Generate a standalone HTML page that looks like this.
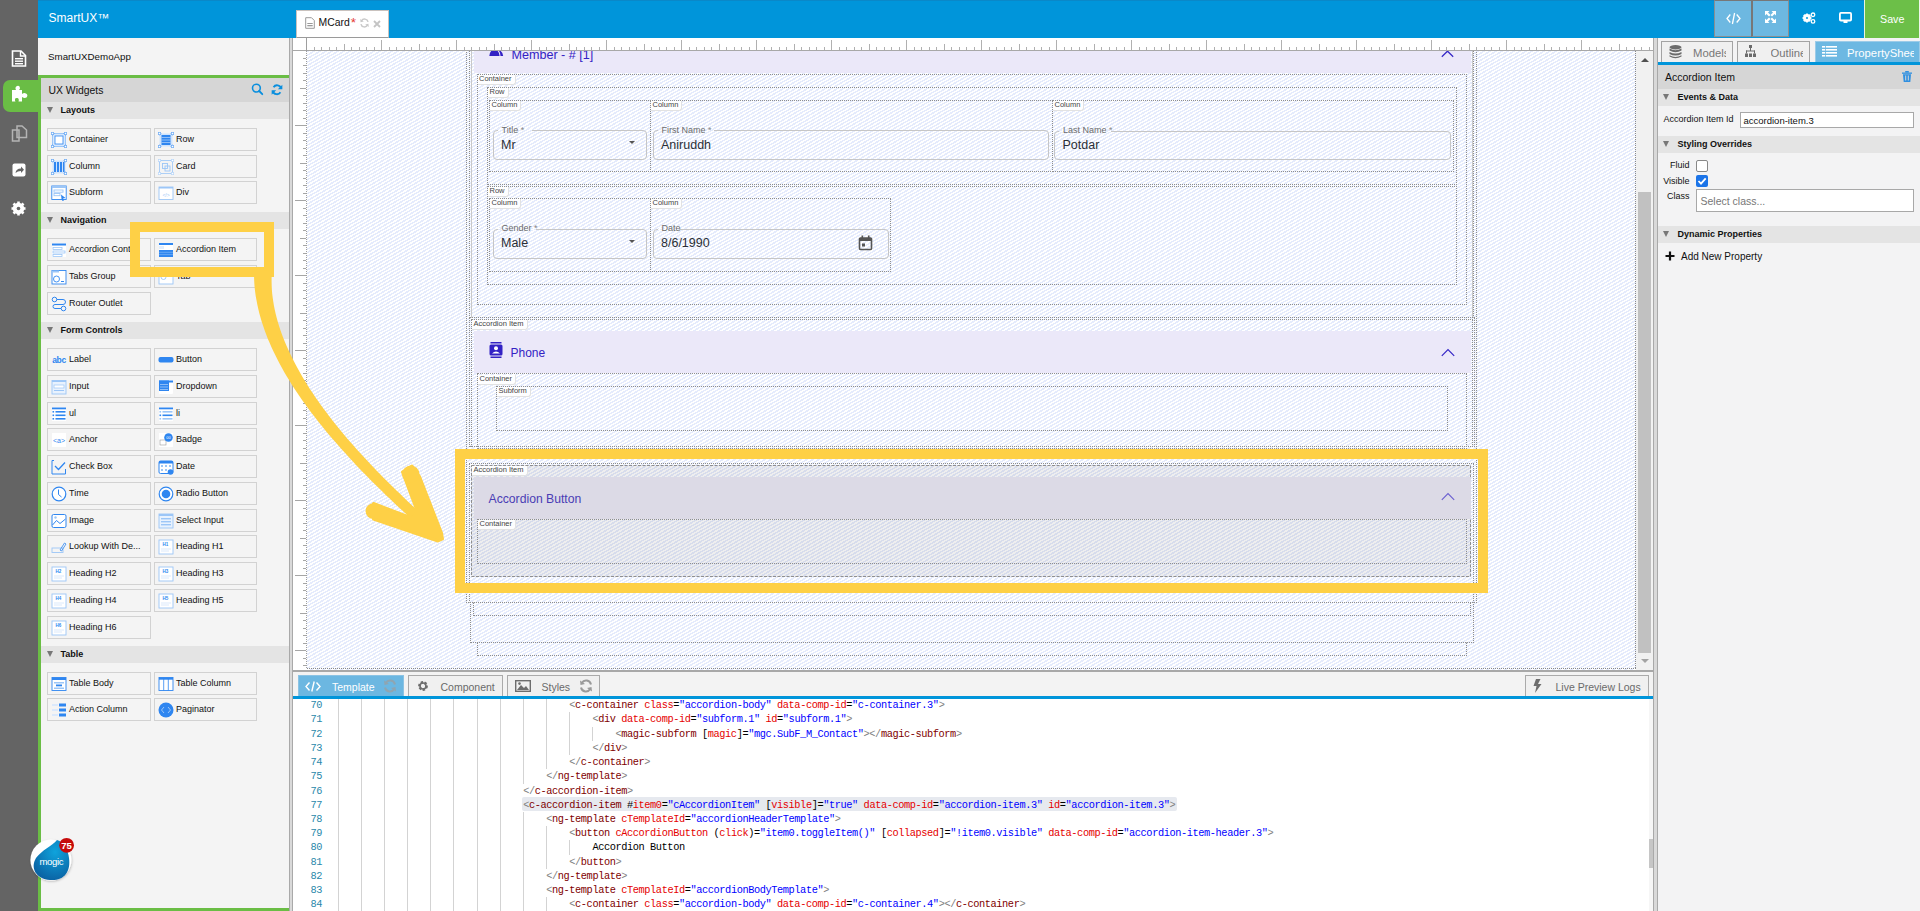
<!DOCTYPE html>
<html><head><meta charset="utf-8"><title>SmartUX</title>
<style>
*{box-sizing:border-box;margin:0;padding:0}
html,body{width:1920px;height:911px;overflow:hidden;background:#f3f3f4;font-family:"Liberation Sans",sans-serif;color:#222}
.a{position:absolute}
.t{position:absolute;white-space:nowrap;line-height:1}
.wb{position:absolute;height:23px;border:1px solid #d2d2d2;background:#f4f4f4}
.wb .lbl{position:absolute;left:21px;top:6px;font-size:9px;line-height:1;color:#111;white-space:nowrap}
.wb svg{position:absolute;left:3px;top:3px}
.sec{position:absolute;left:41px;width:248.5px;height:17px;background:#e4e4e4}
.sec .tri{position:absolute;left:6px;top:5px;width:0;height:0;border-left:3.5px solid transparent;border-right:3.5px solid transparent;border-top:6px solid #777}
.sec .st{position:absolute;left:19.5px;top:4.3px;font-size:9px;font-weight:bold;line-height:1;color:#111}
.hatch{background-color:#fff;background-image:repeating-linear-gradient(150deg,#e5ebfc 0 1.5px,#fff 1.5px 3px)}
.dot{border:1px dotted #8e8e8e}
.clab{position:absolute;font-size:7.5px;line-height:1;color:#444;background:rgba(255,255,255,.9);padding:0.3px 3px 1.7px 1.5px;border-right:1px solid #e2e2e2;border-bottom:1px solid #e2e2e2;border-radius:0 0 3px 0;white-space:nowrap}
.code{position:absolute;font-family:"Liberation Mono",monospace;font-size:10.3px;letter-spacing:-0.41px;white-space:pre;line-height:14.22px}
.tg{color:#800000}.pn{color:#808080}.at{color:#e50000}.st2{color:#0000ff}.bk{color:#000}
</style></head><body>

<div class="a" style="left:0;top:0;width:38px;height:911px;background:#646464"></div>
<div class="a" style="left:3px;top:80px;width:36px;height:32px;background:#6abd45;border-radius:7px 0 0 7px"></div>
<div class="a" style="left:38px;top:0;width:1882px;height:38px;background:#0095da"></div>
<div class="a" style="left:38px;top:0;width:1882px;height:1px;background:#0a88c8"></div>
<div class="t" style="left:48.5px;top:12px;font-size:12px;color:#fff">SmartUX&#8482;</div>
<div class="a" style="left:296px;top:10px;width:93px;height:28px;background:#fff;border:1px solid #c9c2be;border-bottom:1px solid #9a9a9a"></div>
<div class="t" style="left:318.5px;top:18.3px;font-size:10.4px;color:#111">MCard</div>
<div class="t" style="left:350.8px;top:15.5px;font-size:13.5px;color:#e53935">*</div>
<div class="a" style="left:1714px;top:0;width:38px;height:37px;background:#6db8e1;border:1px solid #8a8f92;border-top:1px solid #777"></div>
<div class="a" style="left:1751px;top:0;width:38px;height:37px;background:#6db8e1;border:1px solid #8a8f92;border-left:2px solid #777;border-top:1px solid #777"></div>
<div class="a" style="left:1864px;top:0;width:1px;height:38px;background:#e8f4e0"></div>
<div class="a" style="left:1865px;top:0;width:54px;height:38px;background:#6cbf48"></div><div class="a" style="left:1919px;top:0;width:1px;height:38px;background:#eef6ea"></div>
<div class="t" style="left:1880px;top:13.6px;font-size:10.7px;color:#fff">Save</div>
<div class="a" style="left:38px;top:38px;width:251.5px;height:873px;background:#f4f4f4"></div>
<div class="t" style="left:48px;top:52px;font-size:9.75px;color:#111">SmartUXDemoApp</div>
<div class="a" style="left:38px;top:75px;width:251.5px;height:3px;background:#6abd45"></div>
<div class="a" style="left:38px;top:75px;width:3px;height:836px;background:#6abd45"></div>
<div class="a" style="left:38px;top:908px;width:251.5px;height:3px;background:#6abd45"></div>
<div class="a" style="left:41px;top:78px;width:248.5px;height:24px;background:#d6d6d6"></div>
<div class="t" style="left:48.5px;top:85.5px;font-size:10.4px;color:#111">UX Widgets</div>
<svg class="a" style="left:250px;top:82px" width="14" height="14" viewBox="0 0 14 14"><circle cx="6.4" cy="6.1" r="3.9" fill="none" stroke="#0a8fde" stroke-width="1.6"/><line x1="9.2" y1="9" x2="12.3" y2="12.2" stroke="#0a8fde" stroke-width="1.8" stroke-linecap="round"/></svg>
<svg class="a" style="left:270.5px;top:84px" width="12" height="11.5" viewBox="0 0 14 14"><path d="M12 5.5 A5 5 0 0 0 2.8 4 M2 8.5 A5 5 0 0 0 11.2 10" fill="none" stroke="#0a8fde" stroke-width="2.2"/><path d="M13.5 1 L13.5 6.5 L8 6.5 Z M0.5 13 L0.5 7.5 L6 7.5 Z" fill="#0a8fde"/></svg>
<div class="sec" style="top:102px"><div class="tri"></div><div class="st">Layouts</div></div>
<div class="wb" style="left:47px;top:128.00px;width:104px"><svg width="16" height="16" viewBox="0 0 16 16"><rect x="1.5" y="1.5" width="13" height="13" fill="#d6e8fd" stroke="#9cc6f7" stroke-width="1"/><rect x="4" y="4" width="8" height="8" fill="#fff" stroke="#2f86f0" stroke-width="0.8"/><circle cx="1.5" cy="1.5" r="1.3" fill="#fff" stroke="#2f86f0" stroke-width="0.8"/><circle cx="14.5" cy="1.5" r="1.3" fill="#fff" stroke="#2f86f0" stroke-width="0.8"/><circle cx="1.5" cy="14.5" r="1.3" fill="#fff" stroke="#2f86f0" stroke-width="0.8"/><circle cx="14.5" cy="14.5" r="1.3" fill="#fff" stroke="#2f86f0" stroke-width="0.8"/></svg><div class="lbl">Container</div></div>
<div class="wb" style="left:154px;top:128.00px;width:103px"><svg width="16" height="16" viewBox="0 0 16 16"><rect x="1.5" y="1.5" width="13" height="13" fill="#cfe3fc"/><rect x="3.5" y="3" width="9" height="10" fill="#2f86f0"/><g stroke="#cfe3fc" stroke-width="0.6"><line x1="3.5" y1="5.5" x2="12.5" y2="5.5"/><line x1="3.5" y1="8" x2="12.5" y2="8"/><line x1="3.5" y1="10.5" x2="12.5" y2="10.5"/></g><circle cx="1.5" cy="1.5" r="1.3" fill="#fff" stroke="#2f86f0" stroke-width="0.8"/><circle cx="14.5" cy="1.5" r="1.3" fill="#fff" stroke="#2f86f0" stroke-width="0.8"/><circle cx="1.5" cy="14.5" r="1.3" fill="#fff" stroke="#2f86f0" stroke-width="0.8"/><circle cx="14.5" cy="14.5" r="1.3" fill="#fff" stroke="#2f86f0" stroke-width="0.8"/></svg><div class="lbl">Row</div></div>
<div class="wb" style="left:47px;top:154.73px;width:104px"><svg width="16" height="16" viewBox="0 0 16 16"><rect x="1.5" y="1.5" width="13" height="13" fill="#cfe3fc"/><g fill="#2f86f0"><rect x="3" y="3" width="2" height="10"/><rect x="6" y="3" width="2" height="10"/><rect x="9" y="3" width="2" height="10"/><rect x="12" y="3" width="1.5" height="10"/></g><circle cx="1.5" cy="1.5" r="1.3" fill="#fff" stroke="#2f86f0" stroke-width="0.8"/><circle cx="14.5" cy="1.5" r="1.3" fill="#fff" stroke="#2f86f0" stroke-width="0.8"/><circle cx="1.5" cy="14.5" r="1.3" fill="#fff" stroke="#2f86f0" stroke-width="0.8"/><circle cx="14.5" cy="14.5" r="1.3" fill="#fff" stroke="#2f86f0" stroke-width="0.8"/></svg><div class="lbl">Column</div></div>
<div class="wb" style="left:154px;top:154.73px;width:103px"><svg width="16" height="16" viewBox="0 0 16 16"><rect x="1.5" y="1.5" width="13" height="13" fill="none" stroke="#9cc6f7" stroke-width="0.8"/><rect x="4.5" y="4.5" width="5" height="5" fill="none" stroke="#9cc6f7" stroke-width="0.9"/><rect x="7" y="7" width="5" height="5" fill="none" stroke="#9cc6f7" stroke-width="0.9"/><circle cx="1.5" cy="1.5" r="1.3" fill="#fff" stroke="#9cc6f7" stroke-width="0.8"/><circle cx="14.5" cy="1.5" r="1.3" fill="#fff" stroke="#9cc6f7" stroke-width="0.8"/><circle cx="1.5" cy="14.5" r="1.3" fill="#fff" stroke="#9cc6f7" stroke-width="0.8"/><circle cx="14.5" cy="14.5" r="1.3" fill="#fff" stroke="#9cc6f7" stroke-width="0.8"/></svg><div class="lbl">Card</div></div>
<div class="wb" style="left:47px;top:181.46px;width:104px"><svg width="16" height="16" viewBox="0 0 16 16"><rect x="0.8" y="1" width="14.4" height="13.5" fill="#fff" stroke="#2f86f0" stroke-width="0.9"/><rect x="0.8" y="1" width="14.4" height="2" fill="#9cc6f7"/><rect x="3" y="5" width="9" height="2.2" fill="none" stroke="#9cc6f7" stroke-width="0.9"/><rect x="3" y="8.5" width="6" height="2.2" fill="none" stroke="#9cc6f7" stroke-width="0.9"/><path d="M10 9.5 L14.5 13 L12 13.5 L13 15.5 L11.5 16 L10.5 14 Z" fill="#2f86f0"/></svg><div class="lbl">Subform</div></div>
<div class="wb" style="left:154px;top:181.46px;width:103px"><svg width="16" height="16" viewBox="0 0 16 16"><rect x="1" y="2" width="14" height="12.5" fill="#fff" stroke="#9cc6f7" stroke-width="0.9"/><rect x="1" y="2" width="14" height="1.5" fill="#9cc6f7"/><text x="8" y="11.5" font-size="5" fill="#9cc6f7" text-anchor="middle" font-family="Liberation Sans">&lt;/&gt;</text></svg><div class="lbl">Div</div></div>
<div class="sec" style="top:212px"><div class="tri"></div><div class="st">Navigation</div></div>
<div class="wb" style="left:47px;top:238.40px;width:104px"><svg width="16" height="16" viewBox="0 0 16 16"><rect x="1" y="1" width="14" height="14" fill="#fff"/><rect x="1" y="1.5" width="14" height="2" fill="#2f86f0"/><rect x="2" y="5.5" width="9" height="2" fill="none" stroke="#9cc6f7" stroke-width="0.8"/><rect x="2" y="9" width="12" height="2" fill="none" stroke="#9cc6f7" stroke-width="0.8"/><rect x="2" y="12.5" width="9" height="2" fill="none" stroke="#9cc6f7" stroke-width="0.8"/></svg><div class="lbl">Accordion Cont...</div></div>
<div class="wb" style="left:154px;top:238.40px;width:103px"><svg width="16" height="16" viewBox="0 0 16 16"><rect x="1" y="1" width="14" height="14" fill="#fff"/><rect x="1" y="1" width="14" height="2" fill="#2f86f0"/><rect x="1" y="4" width="5" height="3" fill="#e3eefc"/><rect x="1" y="8" width="14" height="7" fill="#2f86f0"/><g stroke="#9cc6f7" stroke-width="0.5"><line x1="1" y1="10.3" x2="15" y2="10.3"/><line x1="1" y1="12.6" x2="15" y2="12.6"/></g></svg><div class="lbl">Accordion Item</div></div>
<div class="wb" style="left:47px;top:265.13px;width:104px"><svg width="16" height="16" viewBox="0 0 16 16"><rect x="1" y="1.5" width="14" height="13.5" fill="#fff" stroke="#2f86f0" stroke-width="0.9"/><rect x="1" y="1.5" width="7" height="2" fill="#9cc6f7"/><circle cx="5.5" cy="10" r="3" fill="none" stroke="#2f86f0" stroke-width="0.9"/><rect x="10" y="12" width="3" height="1" fill="#2f86f0"/></svg><div class="lbl">Tabs Group</div></div>
<div class="wb" style="left:154px;top:265.13px;width:103px"><svg width="16" height="16" viewBox="0 0 16 16"><rect x="1" y="1.5" width="14" height="13.5" fill="#fff" stroke="#9cc6f7" stroke-width="0.9"/><rect x="1" y="1.5" width="14" height="2" fill="#d0e4fb"/><circle cx="5.5" cy="8" r="2.5" fill="none" stroke="#9cc6f7" stroke-width="0.9"/></svg><div class="lbl">Tab</div></div>
<div class="wb" style="left:47px;top:291.86px;width:104px"><svg width="16" height="16" viewBox="0 0 16 16"><circle cx="3.5" cy="3.5" r="2.3" fill="none" stroke="#2f86f0" stroke-width="1"/><circle cx="12.5" cy="12.5" r="2.3" fill="none" stroke="#2f86f0" stroke-width="1"/><path d="M5.8 3.5 H12 A2.5 2.5 0 0 1 12 8.5 H4 A2 2 0 0 0 4 12.5 H10" fill="none" stroke="#2f86f0" stroke-width="1"/></svg><div class="lbl">Router Outlet</div></div>
<div class="sec" style="top:322px"><div class="tri"></div><div class="st">Form Controls</div></div>
<div class="wb" style="left:47px;top:348.20px;width:104px"><svg width="16" height="16" viewBox="0 0 16 16"><text x="8" y="11" font-size="8.5" font-weight="bold" fill="#2f86f0" text-anchor="middle" font-family="Liberation Sans" letter-spacing="-0.3">abc</text></svg><div class="lbl">Label</div></div>
<div class="wb" style="left:154px;top:348.20px;width:103px"><svg width="16" height="16" viewBox="0 0 16 16"><rect x="0.5" y="5" width="15" height="5.5" rx="2" fill="#2f86f0"/></svg><div class="lbl">Button</div></div>
<div class="wb" style="left:47px;top:374.93px;width:104px"><svg width="16" height="16" viewBox="0 0 16 16"><rect x="1" y="1.5" width="14" height="13.5" fill="#e8f2fe" stroke="#9cc6f7" stroke-width="0.9"/><rect x="1" y="1.5" width="14" height="1.5" fill="#9cc6f7"/><rect x="3" y="6" width="10" height="3" fill="#fff" stroke="#9cc6f7" stroke-width="0.7"/><rect x="3" y="11" width="10" height="1" fill="#9cc6f7"/></svg><div class="lbl">Input</div></div>
<div class="wb" style="left:154px;top:374.93px;width:103px"><svg width="16" height="16" viewBox="0 0 16 16"><rect x="1" y="1" width="14" height="14" rx="1" fill="#fff"/><rect x="1" y="1.5" width="14" height="2" fill="#2f86f0"/><rect x="1" y="1.5" width="10" height="10.5" fill="#2f86f0"/><g stroke="#cfe3fc" stroke-width="0.6"><line x1="2" y1="5.5" x2="10" y2="5.5"/><line x1="2" y1="8" x2="10" y2="8"/><line x1="2" y1="10.5" x2="10" y2="10.5"/></g></svg><div class="lbl">Dropdown</div></div>
<div class="wb" style="left:47px;top:401.66px;width:104px"><svg width="16" height="16" viewBox="0 0 16 16"><rect x="1" y="1" width="14" height="14" fill="#fff"/><rect x="1" y="1.5" width="14" height="1.8" fill="#2f86f0"/><g fill="#2f86f0"><rect x="1.5" y="5" width="1.6" height="1.6"/><rect x="1.5" y="8.5" width="1.6" height="1.6"/><rect x="1.5" y="12" width="1.6" height="1.6"/><rect x="4.5" y="5" width="10" height="1.6"/><rect x="4.5" y="8.5" width="10" height="1.6"/><rect x="4.5" y="12" width="10" height="1.6"/></g></svg><div class="lbl">ul</div></div>
<div class="wb" style="left:154px;top:401.66px;width:103px"><svg width="16" height="16" viewBox="0 0 16 16"><rect x="1" y="1" width="14" height="14" fill="#fff"/><rect x="1" y="1.5" width="14" height="1.8" fill="#2f86f0"/><g fill="#9cc6f7"><rect x="1.5" y="5" width="1.6" height="1.6"/><rect x="4.5" y="5" width="10" height="1.6"/><rect x="1.5" y="12" width="1.6" height="1.6"/><rect x="4.5" y="12" width="10" height="1.6"/></g><rect x="1.5" y="8.5" width="1.6" height="1.6" fill="#2f86f0"/><rect x="4.5" y="8.5" width="10" height="1.6" fill="#2f86f0"/></svg><div class="lbl">li</div></div>
<div class="wb" style="left:47px;top:428.39px;width:104px"><svg width="16" height="16" viewBox="0 0 16 16"><rect x="1" y="1" width="14" height="14" fill="#fff"/><text x="8" y="11" font-size="7" fill="#2f86f0" text-anchor="middle" font-family="Liberation Sans">&lt;a&gt;</text></svg><div class="lbl">Anchor</div></div>
<div class="wb" style="left:154px;top:428.39px;width:103px"><svg width="16" height="16" viewBox="0 0 16 16"><rect x="1" y="1" width="14" height="14" fill="#fff"/><rect x="2" y="8" width="6" height="5" fill="none" stroke="#999" stroke-width="0.6"/><circle cx="10.5" cy="5.5" r="4.3" fill="#2f86f0"/><text x="10.5" y="7.3" font-size="4" fill="#fff" text-anchor="middle" font-family="Liberation Sans">00</text></svg><div class="lbl">Badge</div></div>
<div class="wb" style="left:47px;top:455.12px;width:104px"><svg width="16" height="16" viewBox="0 0 16 16"><path d="M1 1.5 V15 H14.5 V10 M3 1.5 H1" fill="none" stroke="#2f86f0" stroke-width="1"/><path d="M4 7 L7.5 10.5 L14 3.5" fill="none" stroke="#2f86f0" stroke-width="1.3"/></svg><div class="lbl">Check Box</div></div>
<div class="wb" style="left:154px;top:455.12px;width:103px"><svg width="16" height="16" viewBox="0 0 16 16"><rect x="1" y="2" width="14" height="12.5" rx="1.5" fill="#fff" stroke="#2f86f0" stroke-width="1"/><rect x="1" y="2" width="14" height="2.5" fill="#2f86f0"/><g fill="#9cc6f7"><rect x="3" y="6" width="2" height="2"/><rect x="7" y="6" width="2" height="2"/><rect x="11" y="6" width="2" height="2"/><rect x="3" y="10" width="2" height="2"/><rect x="7" y="10" width="2" height="2"/></g><circle cx="12.5" cy="13" r="2.8" fill="#2f86f0"/></svg><div class="lbl">Date</div></div>
<div class="wb" style="left:47px;top:481.85px;width:104px"><svg width="16" height="16" viewBox="0 0 16 16"><circle cx="8" cy="8" r="6.8" fill="#fff" stroke="#2f86f0" stroke-width="1.2"/><path d="M7.5 3.5 V8.5 L10.5 11" fill="none" stroke="#2f86f0" stroke-width="1"/></svg><div class="lbl">Time</div></div>
<div class="wb" style="left:154px;top:481.85px;width:103px"><svg width="16" height="16" viewBox="0 0 16 16"><circle cx="8" cy="8" r="6.8" fill="#fff" stroke="#2f86f0" stroke-width="1.2"/><circle cx="8" cy="8" r="4.3" fill="#2f86f0"/></svg><div class="lbl">Radio Button</div></div>
<div class="wb" style="left:47px;top:508.58px;width:104px"><svg width="16" height="16" viewBox="0 0 16 16"><rect x="1" y="1.5" width="14" height="13" rx="1.5" fill="#fff" stroke="#2f86f0" stroke-width="1"/><path d="M1.5 12 L5.5 7.5 L9 10.5 L14.5 6" fill="none" stroke="#2f86f0" stroke-width="1"/><circle cx="4.5" cy="4.5" r="1.2" fill="#9cc6f7"/></svg><div class="lbl">Image</div></div>
<div class="wb" style="left:154px;top:508.58px;width:103px"><svg width="16" height="16" viewBox="0 0 16 16"><rect x="1" y="1" width="14" height="14" fill="#e8f2fe" stroke="#9cc6f7" stroke-width="0.9"/><rect x="1" y="1" width="14" height="2" fill="#9cc6f7"/><rect x="3" y="5" width="10" height="1.4" fill="#9cc6f7"/><rect x="3" y="8" width="10" height="1.4" fill="#9cc6f7"/><rect x="3" y="11" width="10" height="1.4" fill="#9cc6f7"/></svg><div class="lbl">Select Input</div></div>
<div class="wb" style="left:47px;top:535.31px;width:104px"><svg width="16" height="16" viewBox="0 0 16 16"><rect x="1" y="9" width="11" height="4.5" fill="none" stroke="#9cc6f7" stroke-width="0.9"/><path d="M9 11 L13.5 4 L15 5 L10.5 12 Z" fill="none" stroke="#2f86f0" stroke-width="0.8"/></svg><div class="lbl">Lookup With De...</div></div>
<div class="wb" style="left:154px;top:535.31px;width:103px"><svg width="16" height="16" viewBox="0 0 16 16"><rect x="1" y="1" width="14" height="14" fill="#fff" stroke="#9cc6f7" stroke-width="0.9"/><text x="7.5" y="7" font-size="4.5" font-weight="bold" fill="#2f86f0" text-anchor="middle" font-family="Liberation Sans">H1</text><rect x="3" y="9.5" width="10" height="1" fill="#dbe9fc"/><rect x="3" y="11.5" width="8" height="1" fill="#dbe9fc"/></svg><div class="lbl">Heading H1</div></div>
<div class="wb" style="left:47px;top:562.04px;width:104px"><svg width="16" height="16" viewBox="0 0 16 16"><rect x="1" y="1" width="14" height="14" fill="#fff" stroke="#9cc6f7" stroke-width="0.9"/><text x="7.5" y="7" font-size="4.5" font-weight="bold" fill="#2f86f0" text-anchor="middle" font-family="Liberation Sans">H2</text><rect x="3" y="9.5" width="10" height="1" fill="#dbe9fc"/><rect x="3" y="11.5" width="8" height="1" fill="#dbe9fc"/></svg><div class="lbl">Heading H2</div></div>
<div class="wb" style="left:154px;top:562.04px;width:103px"><svg width="16" height="16" viewBox="0 0 16 16"><rect x="1" y="1" width="14" height="14" fill="#fff" stroke="#9cc6f7" stroke-width="0.9"/><text x="7.5" y="7" font-size="4.5" font-weight="bold" fill="#2f86f0" text-anchor="middle" font-family="Liberation Sans">H3</text><rect x="3" y="9.5" width="10" height="1" fill="#dbe9fc"/><rect x="3" y="11.5" width="8" height="1" fill="#dbe9fc"/></svg><div class="lbl">Heading H3</div></div>
<div class="wb" style="left:47px;top:588.77px;width:104px"><svg width="16" height="16" viewBox="0 0 16 16"><rect x="1" y="1" width="14" height="14" fill="#fff" stroke="#9cc6f7" stroke-width="0.9"/><text x="7.5" y="7" font-size="4.5" font-weight="bold" fill="#2f86f0" text-anchor="middle" font-family="Liberation Sans">H4</text><rect x="3" y="9.5" width="10" height="1" fill="#dbe9fc"/><rect x="3" y="11.5" width="8" height="1" fill="#dbe9fc"/></svg><div class="lbl">Heading H4</div></div>
<div class="wb" style="left:154px;top:588.77px;width:103px"><svg width="16" height="16" viewBox="0 0 16 16"><rect x="1" y="1" width="14" height="14" fill="#fff" stroke="#9cc6f7" stroke-width="0.9"/><text x="7.5" y="7" font-size="4.5" font-weight="bold" fill="#2f86f0" text-anchor="middle" font-family="Liberation Sans">H5</text><rect x="3" y="9.5" width="10" height="1" fill="#dbe9fc"/><rect x="3" y="11.5" width="8" height="1" fill="#dbe9fc"/></svg><div class="lbl">Heading H5</div></div>
<div class="wb" style="left:47px;top:615.50px;width:104px"><svg width="16" height="16" viewBox="0 0 16 16"><rect x="1" y="1" width="14" height="14" fill="#fff" stroke="#9cc6f7" stroke-width="0.9"/><text x="7.5" y="7" font-size="4.5" font-weight="bold" fill="#2f86f0" text-anchor="middle" font-family="Liberation Sans">H6</text><rect x="3" y="9.5" width="10" height="1" fill="#dbe9fc"/><rect x="3" y="11.5" width="8" height="1" fill="#dbe9fc"/></svg><div class="lbl">Heading H6</div></div>
<div class="sec" style="top:646px"><div class="tri"></div><div class="st">Table</div></div>
<div class="wb" style="left:47px;top:671.70px;width:104px"><svg width="16" height="16" viewBox="0 0 16 16"><rect x="1" y="1.5" width="14" height="13" fill="#fff" stroke="#2f86f0" stroke-width="0.9"/><rect x="1" y="1.5" width="14" height="2.5" fill="#2f86f0"/><rect x="3" y="6" width="10" height="1.5" fill="#9cc6f7"/><rect x="5" y="8.5" width="6" height="1.8" fill="#2f86f0"/><rect x="3" y="11.5" width="10" height="1.5" fill="#9cc6f7"/></svg><div class="lbl">Table Body</div></div>
<div class="wb" style="left:154px;top:671.70px;width:103px"><svg width="16" height="16" viewBox="0 0 16 16"><rect x="1" y="1.5" width="14" height="13" fill="#fff" stroke="#2f86f0" stroke-width="0.9"/><rect x="1" y="1.5" width="14" height="2.2" fill="#2f86f0"/><line x1="5.7" y1="2" x2="5.7" y2="14.5" stroke="#2f86f0" stroke-width="0.8"/><line x1="10.3" y1="2" x2="10.3" y2="14.5" stroke="#2f86f0" stroke-width="0.8"/></svg><div class="lbl">Table Column</div></div>
<div class="wb" style="left:47px;top:698.43px;width:104px"><svg width="16" height="16" viewBox="0 0 16 16"><g fill="#2f86f0"><rect x="8" y="1.5" width="7" height="3"/><rect x="8" y="6.5" width="7" height="3"/><rect x="8" y="11.5" width="7" height="3"/></g><g fill="#dbe9fc"><rect x="1" y="2" width="6" height="2"/><rect x="1" y="7" width="6" height="2"/><rect x="1" y="12" width="6" height="2"/></g></svg><div class="lbl">Action Column</div></div>
<div class="wb" style="left:154px;top:698.43px;width:103px"><svg width="16" height="16" viewBox="0 0 16 16"><circle cx="8" cy="8" r="7.5" fill="#2f86f0"/><path d="M6 5 L3.5 8 L6 11 M10 5 L12.5 8 L10 11" fill="none" stroke="#9cc6f7" stroke-width="1"/></svg><div class="lbl">Paginator</div></div>
<div class="a" style="left:289px;top:38px;width:4px;height:873px;background:#d9d9d9;border-left:1px solid #a9a9a9;border-right:1px solid #a9a9a9"></div>
<div class="a" style="left:293px;top:38px;width:1360px;height:632px;background:#fff"></div>
<div class="a hatch" style="left:307px;top:51px;width:1329px;height:619px"></div>
<div class="a" style="left:1653px;top:38px;width:5px;height:873px;background:#d9d9d9;border-left:1px solid #a9a9a9;border-right:1px solid #a9a9a9"></div>
<div class="a" style="left:293px;top:670px;width:1360px;height:2px;background:#a8a8a8"></div>
<div class="a" style="left:293px;top:672px;width:1360px;height:24px;background:#f3f3f3"></div>
<div class="a" style="left:293px;top:696px;width:1360px;height:3px;background:#0095da"></div>
<div class="a" style="left:293px;top:699px;width:1360px;height:212px;background:#fff"></div>
<div class="a" style="left:1658px;top:62px;width:262px;height:3px;background:#0095da"></div>
<div class="a" style="left:1658px;top:65px;width:262px;height:24px;background:#d6d6d6"></div>
<div class="a" style="left:1636px;top:51px;width:17px;height:619px;background:#f1f1f1"></div>
<div class="a" style="left:1638px;top:191.5px;width:13px;height:461px;background:#c1c1c1"></div>
<div class="a" style="left:1641px;top:58px;width:0;height:0;border-left:4px solid transparent;border-right:4px solid transparent;border-bottom:4px solid #505050"></div>
<div class="a" style="left:1641px;top:659px;width:0;height:0;border-left:4px solid transparent;border-right:4px solid transparent;border-top:4px solid #a3a3a3"></div>
<div class="a" style="left:1635px;top:51px;width:1px;height:617px;border-left:1px dotted #8a8a8a"></div>
<div class="a" style="left:307px;top:668px;width:1329px;height:1px;border-top:1px dotted #8a8a8a"></div>
<div class="a dot" style="left:466px;top:45px;width:1011px;height:558px;"></div>
<div class="a dot" style="left:469px;top:45px;width:1005px;height:273px;border-bottom-color:transparent"></div>
<div class="a" style="left:471px;top:45px;width:1px;height:273px;background:#c8c8c8"></div>
<div class="a" style="left:1472px;top:45px;width:1px;height:273px;background:#c8c8c8"></div>
<div class="a" style="left:473.5px;top:51px;width:997.5px;height:22px;background:#ebe8f9"></div>
<div class="t" style="left:511.4px;top:48.6px;font-size:12.6px;color:#3322c4">Member - # [1]</div>
<svg class="a" style="left:489px;top:51px" width="15" height="6"><path d="M0.3 5 Q0.8 -1 5.5 -1.5 Q10 -1 10.6 5 Z" fill="#3322c4"/><path d="M9 -1 Q13.5 -0.5 14.2 5 L11.5 5 Q11.5 1 9 -1 Z" fill="#3322c4"/></svg>
<svg class="a" style="left:1441px;top:50px" width="13" height="8"><path d="M0.8 6.8 L6.5 1.2 L12.2 6.8" fill="none" stroke="#3526c6" stroke-width="1.2"/></svg>
<div class="a dot" style="left:477px;top:74px;width:990px;height:231px;"></div>
<div class="clab" style="left:477.5px;top:75px">Container</div>
<div class="a dot" style="left:487px;top:87px;width:970px;height:98px;"></div>
<div class="clab" style="left:488px;top:88px">Row</div>
<div class="a dot" style="left:489px;top:100px;width:162px;height:72px;"></div>
<div class="clab" style="left:490px;top:101px">Column</div>
<div class="a dot" style="left:650px;top:100px;width:403px;height:72px;"></div>
<div class="clab" style="left:651px;top:101px">Column</div>
<div class="a dot" style="left:1052px;top:100px;width:402px;height:72px;"></div>
<div class="clab" style="left:1053px;top:101px">Column</div>
<div class="a dot" style="left:487px;top:186px;width:970px;height:99px;"></div>
<div class="clab" style="left:488px;top:187px">Row</div>
<div class="a dot" style="left:489px;top:198px;width:162px;height:74px;"></div>
<div class="clab" style="left:490px;top:199px">Column</div>
<div class="a dot" style="left:650px;top:198px;width:241px;height:74px;"></div>
<div class="clab" style="left:651px;top:199px">Column</div>
<div class="a" style="left:492.5px;top:130px;width:154.5px;height:30px;border:1px solid #c6c6c6;border-radius:4px"></div>
<div class="a hatch" style="left:497.5px;top:129px;width:34.0px;height:2px;background-attachment:fixed"></div>
<div class="t" style="left:501.5px;top:125.5px;font-size:9px;color:#6b6b6b">Title <span style="color:#888">*</span></div>
<div class="t" style="left:501.0px;top:138.5px;font-size:12.5px;color:#2a2f36">Mr</div>
<div class="a" style="left:629px;top:141px;width:0;height:0;border-left:3px solid transparent;border-right:3px solid transparent;border-top:3px solid #555"></div>
<div class="a" style="left:652.5px;top:130px;width:396.0px;height:30px;border:1px solid #c6c6c6;border-radius:4px"></div>
<div class="a hatch" style="left:657.5px;top:129px;width:56.0px;height:2px;background-attachment:fixed"></div>
<div class="t" style="left:661.5px;top:125.5px;font-size:9px;color:#6b6b6b">First Name <span style="color:#888">*</span></div>
<div class="t" style="left:661.0px;top:138.5px;font-size:12.5px;color:#2a2f36">Aniruddh</div>
<div class="a" style="left:1054px;top:130.5px;width:396.5px;height:29.0px;border:1px solid #c6c6c6;border-radius:4px"></div>
<div class="a hatch" style="left:1059px;top:129.5px;width:51.6px;height:2px;background-attachment:fixed"></div>
<div class="t" style="left:1063px;top:126.0px;font-size:9px;color:#6b6b6b">Last Name <span style="color:#888">*</span></div>
<div class="t" style="left:1062.5px;top:139.0px;font-size:12.5px;color:#2a2f36">Potdar</div>
<div class="a" style="left:492.5px;top:228.5px;width:154.0px;height:30.5px;border:1px solid #c6c6c6;border-radius:4px"></div>
<div class="a hatch" style="left:497.5px;top:227.5px;width:38.4px;height:2px;background-attachment:fixed"></div>
<div class="t" style="left:501.5px;top:224.0px;font-size:9px;color:#6b6b6b">Gender <span style="color:#888">*</span></div>
<div class="t" style="left:501.0px;top:237.0px;font-size:12.5px;color:#2a2f36">Male</div>
<div class="a" style="left:628.5px;top:239.5px;width:0;height:0;border-left:3px solid transparent;border-right:3px solid transparent;border-top:3px solid #555"></div>
<div class="a" style="left:652.5px;top:228.5px;width:236.0px;height:30.5px;border:1px solid #c6c6c6;border-radius:4px"></div>
<div class="a hatch" style="left:657.5px;top:227.5px;width:21.6px;height:2px;background-attachment:fixed"></div>
<div class="t" style="left:661.5px;top:224.0px;font-size:9px;color:#6b6b6b">Date</div>
<div class="t" style="left:661.0px;top:237.0px;font-size:12.5px;color:#2a2f36">8/6/1990</div>
<svg class="a" style="left:857.5px;top:234.5px" width="15" height="16" viewBox="0 0 15 16"><rect x="1.5" y="3" width="12" height="11.5" rx="1" fill="none" stroke="#555" stroke-width="1.6"/><rect x="1.5" y="3" width="12" height="3" fill="#555"/><rect x="3.5" y="0.5" width="1.6" height="3" fill="#555"/><rect x="9.9" y="0.5" width="1.6" height="3" fill="#555"/><rect x="4" y="8.5" width="3" height="3" fill="#555"/></svg>
<div class="a dot" style="left:469px;top:317px;width:1006px;height:130px;"></div>
<div class="a dot" style="left:471px;top:319px;width:1002px;height:128px;"></div>
<div class="clab" style="left:472px;top:320px">Accordion Item</div>
<div class="a" style="left:473.5px;top:331px;width:997px;height:42px;background:#ebe8f9"></div>
<svg class="a" style="left:489px;top:342px" width="14" height="16" viewBox="0 0 14 16"><rect x="1.5" y="0" width="11" height="1.5" fill="#3322c4"/><rect x="1.5" y="14.5" width="11" height="1.5" fill="#3322c4"/><rect x="0.5" y="2.5" width="13" height="11" rx="1.5" fill="#3322c4"/><circle cx="7" cy="6.3" r="2" fill="#fff"/><path d="M3 11.5 Q7 7.5 11 11.5 Z" fill="#fff"/></svg>
<div class="t" style="left:510.5px;top:347px;font-size:12px;color:#3322c4">Phone</div>
<svg class="a" style="left:1441px;top:348px" width="14" height="9"><path d="M0.8 7.8 L7 1.5 L13.2 7.8" fill="none" stroke="#3526c6" stroke-width="1.2"/></svg>
<div class="a dot" style="left:477px;top:373px;width:990px;height:76px;"></div>
<div class="clab" style="left:478px;top:374.5px">Container</div>
<div class="a dot" style="left:496px;top:386px;width:952px;height:45px;"></div>
<div class="clab" style="left:497px;top:387px">Subform</div>
<div class="a dot" style="left:469px;top:463px;width:1005px;height:140px;border-bottom-color:transparent"></div>
<div class="a" style="left:471px;top:465px;width:1000px;height:112px;background:rgba(120,120,130,0.13)"></div>
<svg class="a" style="left:471px;top:465px" width="1000" height="112"><rect x="0.5" y="0.5" width="999" height="111" fill="none" stroke="#8f8f8f" stroke-width="1" stroke-dasharray="3 1.5"/></svg>
<div class="clab" style="left:472px;top:466px">Accordion Item</div>
<div class="a" style="left:473.5px;top:477px;width:997.5px;height:41.5px;background:#dcdae6"></div>
<div class="t" style="left:488.5px;top:493px;font-size:12.2px;color:#4a3db5">Accordion Button</div>
<svg class="a" style="left:1441px;top:492px" width="14" height="9"><path d="M0.8 7.8 L7 1.5 L13.2 7.8" fill="none" stroke="#6a5ed0" stroke-width="1.1"/></svg>
<div class="a dot" style="left:477px;top:519px;width:990px;height:45px;"></div>
<div class="clab" style="left:478px;top:520px">Container</div>
<div class="a dot" style="left:473px;top:602px;width:998px;height:14px;border-top-color:transparent"></div>
<div class="a dot" style="left:470px;top:602px;width:1004px;height:41px;border-top-color:transparent"></div>
<div class="a dot" style="left:477px;top:642px;width:990px;height:14px;border-top-color:transparent"></div>
<div class="a" style="left:293px;top:38px;width:1360px;height:13px;background:#fff"></div>
<div class="a" style="left:293px;top:51px;width:14px;height:617px;background:#fff"></div>
<svg class="a" style="left:293px;top:38px" width="1360" height="13" shape-rendering="crispEdges"><g stroke="#b0b0b0" stroke-width="1"><line x1="13.50" y1="2" x2="13.50" y2="12" /><line x1="21.00" y1="9" x2="21.00" y2="12" /><line x1="28.50" y1="9" x2="28.50" y2="12" /><line x1="36.00" y1="9" x2="36.00" y2="12" /><line x1="43.50" y1="9" x2="43.50" y2="12" /><line x1="51.00" y1="6" x2="51.00" y2="12" /><line x1="58.50" y1="9" x2="58.50" y2="12" /><line x1="66.00" y1="9" x2="66.00" y2="12" /><line x1="73.50" y1="9" x2="73.50" y2="12" /><line x1="81.00" y1="9" x2="81.00" y2="12" /><line x1="88.50" y1="2" x2="88.50" y2="12" /><line x1="96.00" y1="9" x2="96.00" y2="12" /><line x1="103.50" y1="9" x2="103.50" y2="12" /><line x1="111.00" y1="9" x2="111.00" y2="12" /><line x1="118.50" y1="9" x2="118.50" y2="12" /><line x1="126.00" y1="6" x2="126.00" y2="12" /><line x1="133.50" y1="9" x2="133.50" y2="12" /><line x1="141.00" y1="9" x2="141.00" y2="12" /><line x1="148.50" y1="9" x2="148.50" y2="12" /><line x1="156.00" y1="9" x2="156.00" y2="12" /><line x1="163.50" y1="2" x2="163.50" y2="12" /><line x1="171.00" y1="9" x2="171.00" y2="12" /><line x1="178.50" y1="9" x2="178.50" y2="12" /><line x1="186.00" y1="9" x2="186.00" y2="12" /><line x1="193.50" y1="9" x2="193.50" y2="12" /><line x1="201.00" y1="6" x2="201.00" y2="12" /><line x1="208.50" y1="9" x2="208.50" y2="12" /><line x1="216.00" y1="9" x2="216.00" y2="12" /><line x1="223.50" y1="9" x2="223.50" y2="12" /><line x1="231.00" y1="9" x2="231.00" y2="12" /><line x1="238.50" y1="2" x2="238.50" y2="12" /><line x1="246.00" y1="9" x2="246.00" y2="12" /><line x1="253.50" y1="9" x2="253.50" y2="12" /><line x1="261.00" y1="9" x2="261.00" y2="12" /><line x1="268.50" y1="9" x2="268.50" y2="12" /><line x1="276.00" y1="6" x2="276.00" y2="12" /><line x1="283.50" y1="9" x2="283.50" y2="12" /><line x1="291.00" y1="9" x2="291.00" y2="12" /><line x1="298.50" y1="9" x2="298.50" y2="12" /><line x1="306.00" y1="9" x2="306.00" y2="12" /><line x1="313.50" y1="2" x2="313.50" y2="12" /><line x1="321.00" y1="9" x2="321.00" y2="12" /><line x1="328.50" y1="9" x2="328.50" y2="12" /><line x1="336.00" y1="9" x2="336.00" y2="12" /><line x1="343.50" y1="9" x2="343.50" y2="12" /><line x1="351.00" y1="6" x2="351.00" y2="12" /><line x1="358.50" y1="9" x2="358.50" y2="12" /><line x1="366.00" y1="9" x2="366.00" y2="12" /><line x1="373.50" y1="9" x2="373.50" y2="12" /><line x1="381.00" y1="9" x2="381.00" y2="12" /><line x1="388.50" y1="2" x2="388.50" y2="12" /><line x1="396.00" y1="9" x2="396.00" y2="12" /><line x1="403.50" y1="9" x2="403.50" y2="12" /><line x1="411.00" y1="9" x2="411.00" y2="12" /><line x1="418.50" y1="9" x2="418.50" y2="12" /><line x1="426.00" y1="6" x2="426.00" y2="12" /><line x1="433.50" y1="9" x2="433.50" y2="12" /><line x1="441.00" y1="9" x2="441.00" y2="12" /><line x1="448.50" y1="9" x2="448.50" y2="12" /><line x1="456.00" y1="9" x2="456.00" y2="12" /><line x1="463.50" y1="2" x2="463.50" y2="12" /><line x1="471.00" y1="9" x2="471.00" y2="12" /><line x1="478.50" y1="9" x2="478.50" y2="12" /><line x1="486.00" y1="9" x2="486.00" y2="12" /><line x1="493.50" y1="9" x2="493.50" y2="12" /><line x1="501.00" y1="6" x2="501.00" y2="12" /><line x1="508.50" y1="9" x2="508.50" y2="12" /><line x1="516.00" y1="9" x2="516.00" y2="12" /><line x1="523.50" y1="9" x2="523.50" y2="12" /><line x1="531.00" y1="9" x2="531.00" y2="12" /><line x1="538.50" y1="2" x2="538.50" y2="12" /><line x1="546.00" y1="9" x2="546.00" y2="12" /><line x1="553.50" y1="9" x2="553.50" y2="12" /><line x1="561.00" y1="9" x2="561.00" y2="12" /><line x1="568.50" y1="9" x2="568.50" y2="12" /><line x1="576.00" y1="6" x2="576.00" y2="12" /><line x1="583.50" y1="9" x2="583.50" y2="12" /><line x1="591.00" y1="9" x2="591.00" y2="12" /><line x1="598.50" y1="9" x2="598.50" y2="12" /><line x1="606.00" y1="9" x2="606.00" y2="12" /><line x1="613.50" y1="2" x2="613.50" y2="12" /><line x1="621.00" y1="9" x2="621.00" y2="12" /><line x1="628.50" y1="9" x2="628.50" y2="12" /><line x1="636.00" y1="9" x2="636.00" y2="12" /><line x1="643.50" y1="9" x2="643.50" y2="12" /><line x1="651.00" y1="6" x2="651.00" y2="12" /><line x1="658.50" y1="9" x2="658.50" y2="12" /><line x1="666.00" y1="9" x2="666.00" y2="12" /><line x1="673.50" y1="9" x2="673.50" y2="12" /><line x1="681.00" y1="9" x2="681.00" y2="12" /><line x1="688.50" y1="2" x2="688.50" y2="12" /><line x1="696.00" y1="9" x2="696.00" y2="12" /><line x1="703.50" y1="9" x2="703.50" y2="12" /><line x1="711.00" y1="9" x2="711.00" y2="12" /><line x1="718.50" y1="9" x2="718.50" y2="12" /><line x1="726.00" y1="6" x2="726.00" y2="12" /><line x1="733.50" y1="9" x2="733.50" y2="12" /><line x1="741.00" y1="9" x2="741.00" y2="12" /><line x1="748.50" y1="9" x2="748.50" y2="12" /><line x1="756.00" y1="9" x2="756.00" y2="12" /><line x1="763.50" y1="2" x2="763.50" y2="12" /><line x1="771.00" y1="9" x2="771.00" y2="12" /><line x1="778.50" y1="9" x2="778.50" y2="12" /><line x1="786.00" y1="9" x2="786.00" y2="12" /><line x1="793.50" y1="9" x2="793.50" y2="12" /><line x1="801.00" y1="6" x2="801.00" y2="12" /><line x1="808.50" y1="9" x2="808.50" y2="12" /><line x1="816.00" y1="9" x2="816.00" y2="12" /><line x1="823.50" y1="9" x2="823.50" y2="12" /><line x1="831.00" y1="9" x2="831.00" y2="12" /><line x1="838.50" y1="2" x2="838.50" y2="12" /><line x1="846.00" y1="9" x2="846.00" y2="12" /><line x1="853.50" y1="9" x2="853.50" y2="12" /><line x1="861.00" y1="9" x2="861.00" y2="12" /><line x1="868.50" y1="9" x2="868.50" y2="12" /><line x1="876.00" y1="6" x2="876.00" y2="12" /><line x1="883.50" y1="9" x2="883.50" y2="12" /><line x1="891.00" y1="9" x2="891.00" y2="12" /><line x1="898.50" y1="9" x2="898.50" y2="12" /><line x1="906.00" y1="9" x2="906.00" y2="12" /><line x1="913.50" y1="2" x2="913.50" y2="12" /><line x1="921.00" y1="9" x2="921.00" y2="12" /><line x1="928.50" y1="9" x2="928.50" y2="12" /><line x1="936.00" y1="9" x2="936.00" y2="12" /><line x1="943.50" y1="9" x2="943.50" y2="12" /><line x1="951.00" y1="6" x2="951.00" y2="12" /><line x1="958.50" y1="9" x2="958.50" y2="12" /><line x1="966.00" y1="9" x2="966.00" y2="12" /><line x1="973.50" y1="9" x2="973.50" y2="12" /><line x1="981.00" y1="9" x2="981.00" y2="12" /><line x1="988.50" y1="2" x2="988.50" y2="12" /><line x1="996.00" y1="9" x2="996.00" y2="12" /><line x1="1003.50" y1="9" x2="1003.50" y2="12" /><line x1="1011.00" y1="9" x2="1011.00" y2="12" /><line x1="1018.50" y1="9" x2="1018.50" y2="12" /><line x1="1026.00" y1="6" x2="1026.00" y2="12" /><line x1="1033.50" y1="9" x2="1033.50" y2="12" /><line x1="1041.00" y1="9" x2="1041.00" y2="12" /><line x1="1048.50" y1="9" x2="1048.50" y2="12" /><line x1="1056.00" y1="9" x2="1056.00" y2="12" /><line x1="1063.50" y1="2" x2="1063.50" y2="12" /><line x1="1071.00" y1="9" x2="1071.00" y2="12" /><line x1="1078.50" y1="9" x2="1078.50" y2="12" /><line x1="1086.00" y1="9" x2="1086.00" y2="12" /><line x1="1093.50" y1="9" x2="1093.50" y2="12" /><line x1="1101.00" y1="6" x2="1101.00" y2="12" /><line x1="1108.50" y1="9" x2="1108.50" y2="12" /><line x1="1116.00" y1="9" x2="1116.00" y2="12" /><line x1="1123.50" y1="9" x2="1123.50" y2="12" /><line x1="1131.00" y1="9" x2="1131.00" y2="12" /><line x1="1138.50" y1="2" x2="1138.50" y2="12" /><line x1="1146.00" y1="9" x2="1146.00" y2="12" /><line x1="1153.50" y1="9" x2="1153.50" y2="12" /><line x1="1161.00" y1="9" x2="1161.00" y2="12" /><line x1="1168.50" y1="9" x2="1168.50" y2="12" /><line x1="1176.00" y1="6" x2="1176.00" y2="12" /><line x1="1183.50" y1="9" x2="1183.50" y2="12" /><line x1="1191.00" y1="9" x2="1191.00" y2="12" /><line x1="1198.50" y1="9" x2="1198.50" y2="12" /><line x1="1206.00" y1="9" x2="1206.00" y2="12" /><line x1="1213.50" y1="2" x2="1213.50" y2="12" /><line x1="1221.00" y1="9" x2="1221.00" y2="12" /><line x1="1228.50" y1="9" x2="1228.50" y2="12" /><line x1="1236.00" y1="9" x2="1236.00" y2="12" /><line x1="1243.50" y1="9" x2="1243.50" y2="12" /><line x1="1251.00" y1="6" x2="1251.00" y2="12" /><line x1="1258.50" y1="9" x2="1258.50" y2="12" /><line x1="1266.00" y1="9" x2="1266.00" y2="12" /><line x1="1273.50" y1="9" x2="1273.50" y2="12" /><line x1="1281.00" y1="9" x2="1281.00" y2="12" /><line x1="1288.50" y1="2" x2="1288.50" y2="12" /><line x1="1296.00" y1="9" x2="1296.00" y2="12" /><line x1="1303.50" y1="9" x2="1303.50" y2="12" /><line x1="1311.00" y1="9" x2="1311.00" y2="12" /><line x1="1318.50" y1="9" x2="1318.50" y2="12" /><line x1="1326.00" y1="6" x2="1326.00" y2="12" /><line x1="1333.50" y1="9" x2="1333.50" y2="12" /><line x1="1341.00" y1="9" x2="1341.00" y2="12" /><line x1="1348.50" y1="9" x2="1348.50" y2="12" /><line x1="1356.00" y1="9" x2="1356.00" y2="12" /></g><line x1="0" y1="12.5" x2="1360" y2="12.5" stroke="#a8a8a8"/><line x1="13.5" y1="0" x2="13.5" y2="13" stroke="#9e9e9e"/></svg>
<svg class="a" style="left:293px;top:51px" width="14" height="617" shape-rendering="crispEdges"><g stroke="#a6a6a6" stroke-width="1"><line x1="2" y1="-0.50" x2="13" y2="-0.50" /><line x1="10" y1="7.00" x2="13" y2="7.00" /><line x1="10" y1="14.50" x2="13" y2="14.50" /><line x1="10" y1="22.00" x2="13" y2="22.00" /><line x1="10" y1="29.50" x2="13" y2="29.50" /><line x1="7" y1="37.00" x2="13" y2="37.00" /><line x1="10" y1="44.50" x2="13" y2="44.50" /><line x1="10" y1="52.00" x2="13" y2="52.00" /><line x1="10" y1="59.50" x2="13" y2="59.50" /><line x1="10" y1="67.00" x2="13" y2="67.00" /><line x1="2" y1="74.50" x2="13" y2="74.50" /><line x1="10" y1="82.00" x2="13" y2="82.00" /><line x1="10" y1="89.50" x2="13" y2="89.50" /><line x1="10" y1="97.00" x2="13" y2="97.00" /><line x1="10" y1="104.50" x2="13" y2="104.50" /><line x1="7" y1="112.00" x2="13" y2="112.00" /><line x1="10" y1="119.50" x2="13" y2="119.50" /><line x1="10" y1="127.00" x2="13" y2="127.00" /><line x1="10" y1="134.50" x2="13" y2="134.50" /><line x1="10" y1="142.00" x2="13" y2="142.00" /><line x1="2" y1="149.50" x2="13" y2="149.50" /><line x1="10" y1="157.00" x2="13" y2="157.00" /><line x1="10" y1="164.50" x2="13" y2="164.50" /><line x1="10" y1="172.00" x2="13" y2="172.00" /><line x1="10" y1="179.50" x2="13" y2="179.50" /><line x1="7" y1="187.00" x2="13" y2="187.00" /><line x1="10" y1="194.50" x2="13" y2="194.50" /><line x1="10" y1="202.00" x2="13" y2="202.00" /><line x1="10" y1="209.50" x2="13" y2="209.50" /><line x1="10" y1="217.00" x2="13" y2="217.00" /><line x1="2" y1="224.50" x2="13" y2="224.50" /><line x1="10" y1="232.00" x2="13" y2="232.00" /><line x1="10" y1="239.50" x2="13" y2="239.50" /><line x1="10" y1="247.00" x2="13" y2="247.00" /><line x1="10" y1="254.50" x2="13" y2="254.50" /><line x1="7" y1="262.00" x2="13" y2="262.00" /><line x1="10" y1="269.50" x2="13" y2="269.50" /><line x1="10" y1="277.00" x2="13" y2="277.00" /><line x1="10" y1="284.50" x2="13" y2="284.50" /><line x1="10" y1="292.00" x2="13" y2="292.00" /><line x1="2" y1="299.50" x2="13" y2="299.50" /><line x1="10" y1="307.00" x2="13" y2="307.00" /><line x1="10" y1="314.50" x2="13" y2="314.50" /><line x1="10" y1="322.00" x2="13" y2="322.00" /><line x1="10" y1="329.50" x2="13" y2="329.50" /><line x1="7" y1="337.00" x2="13" y2="337.00" /><line x1="10" y1="344.50" x2="13" y2="344.50" /><line x1="10" y1="352.00" x2="13" y2="352.00" /><line x1="10" y1="359.50" x2="13" y2="359.50" /><line x1="10" y1="367.00" x2="13" y2="367.00" /><line x1="2" y1="374.50" x2="13" y2="374.50" /><line x1="10" y1="382.00" x2="13" y2="382.00" /><line x1="10" y1="389.50" x2="13" y2="389.50" /><line x1="10" y1="397.00" x2="13" y2="397.00" /><line x1="10" y1="404.50" x2="13" y2="404.50" /><line x1="7" y1="412.00" x2="13" y2="412.00" /><line x1="10" y1="419.50" x2="13" y2="419.50" /><line x1="10" y1="427.00" x2="13" y2="427.00" /><line x1="10" y1="434.50" x2="13" y2="434.50" /><line x1="10" y1="442.00" x2="13" y2="442.00" /><line x1="2" y1="449.50" x2="13" y2="449.50" /><line x1="10" y1="457.00" x2="13" y2="457.00" /><line x1="10" y1="464.50" x2="13" y2="464.50" /><line x1="10" y1="472.00" x2="13" y2="472.00" /><line x1="10" y1="479.50" x2="13" y2="479.50" /><line x1="7" y1="487.00" x2="13" y2="487.00" /><line x1="10" y1="494.50" x2="13" y2="494.50" /><line x1="10" y1="502.00" x2="13" y2="502.00" /><line x1="10" y1="509.50" x2="13" y2="509.50" /><line x1="10" y1="517.00" x2="13" y2="517.00" /><line x1="2" y1="524.50" x2="13" y2="524.50" /><line x1="10" y1="532.00" x2="13" y2="532.00" /><line x1="10" y1="539.50" x2="13" y2="539.50" /><line x1="10" y1="547.00" x2="13" y2="547.00" /><line x1="10" y1="554.50" x2="13" y2="554.50" /><line x1="7" y1="562.00" x2="13" y2="562.00" /><line x1="10" y1="569.50" x2="13" y2="569.50" /><line x1="10" y1="577.00" x2="13" y2="577.00" /><line x1="10" y1="584.50" x2="13" y2="584.50" /><line x1="10" y1="592.00" x2="13" y2="592.00" /><line x1="2" y1="599.50" x2="13" y2="599.50" /><line x1="10" y1="607.00" x2="13" y2="607.00" /><line x1="10" y1="614.50" x2="13" y2="614.50" /></g><line x1="13.5" y1="0" x2="13.5" y2="617" stroke="#9e9e9e" stroke-dasharray="1 1"/></svg>
<div class="a" style="left:297.5px;top:675px;width:106.5px;height:21px;background:#6cb7e1;border:1px solid #8bc3e4;border-bottom:0"></div>
<div class="a" style="left:408px;top:675px;width:95px;height:21px;background:#f0f0f0;border:1px solid #aaa;border-bottom:0"></div>
<div class="a" style="left:507px;top:675px;width:93px;height:21px;background:#f0f0f0;border:1px solid #aaa;border-bottom:0"></div>
<div class="a" style="left:1525px;top:675px;width:124px;height:21px;background:#f0f0f0;border:1px solid #aaa;border-bottom:0"></div>
<svg class="a" style="left:305px;top:681px" width="16" height="11" viewBox="0 0 16 11"><path d="M4.5 1.5 L1 5.5 L4.5 9.5 M11.5 1.5 L15 5.5 L11.5 9.5 M9.2 0.5 L6.8 10.5" fill="none" stroke="#fff" stroke-width="1.4"/></svg>
<div class="t" style="left:332px;top:682px;font-size:10.5px;color:#fff">Template</div>
<svg class="a" style="left:383px;top:679px" width="14" height="14" viewBox="0 0 14 14"><path d="M12 5.5 A5 5 0 0 0 2.8 4 M2 8.5 A5 5 0 0 0 11.2 10" fill="none" stroke="#8fa5b1" stroke-width="2"/><path d="M1 1.5 L1.5 6 L6 5 Z M13 12.5 L12.5 8 L8 9 Z" fill="#8fa5b1"/></svg>
<svg class="a" style="left:417px;top:680px" width="12" height="12" viewBox="0 0 12 12"><circle cx="6" cy="6" r="3.6" fill="none" stroke="#6d6d6d" stroke-width="2.6" stroke-dasharray="2.2 1.4"/><circle cx="6" cy="6" r="3" fill="none" stroke="#6d6d6d" stroke-width="1.6"/></svg>
<div class="t" style="left:440.5px;top:682px;font-size:10.5px;color:#6a6a6a">Component</div>
<svg class="a" style="left:515px;top:680px" width="16" height="12" viewBox="0 0 16 12"><rect x="0.7" y="0.7" width="14.6" height="10.6" fill="none" stroke="#6d6d6d" stroke-width="1.4"/><path d="M2 10 L6 5 L9 8 L11 6 L14 10 Z" fill="#6d6d6d"/><circle cx="4.5" cy="3.6" r="1.3" fill="#6d6d6d"/></svg>
<div class="t" style="left:541.5px;top:682px;font-size:10.5px;color:#6a6a6a">Styles</div>
<svg class="a" style="left:579px;top:679px" width="14" height="14" viewBox="0 0 14 14"><path d="M12 5.5 A5 5 0 0 0 2.8 4 M2 8.5 A5 5 0 0 0 11.2 10" fill="none" stroke="#9a9a9a" stroke-width="2"/><path d="M1 1.5 L1.5 6 L6 5 Z M13 12.5 L12.5 8 L8 9 Z" fill="#9a9a9a"/></svg>
<svg class="a" style="left:1533px;top:679px" width="9" height="14" viewBox="0 0 9 14"><path d="M3 0 L7.5 0 L5 5 L8.5 5 L2 14 L3.5 7 L0.5 7 Z" fill="#6d6d6d"/></svg>
<div class="t" style="left:1555.5px;top:682px;font-size:10.5px;color:#6a6a6a">Live Preview Logs</div>
<svg class="a" style="left:0;top:699px" width="1653" height="212"><g stroke="#d3d3d3" stroke-width="1" shape-rendering="crispEdges"><line x1="338.5" y1="-0.80" x2="338.5" y2="13.42"/><line x1="361.6" y1="-0.80" x2="361.6" y2="13.42"/><line x1="384.7" y1="-0.80" x2="384.7" y2="13.42"/><line x1="407.7" y1="-0.80" x2="407.7" y2="13.42"/><line x1="430.8" y1="-0.80" x2="430.8" y2="13.42"/><line x1="453.9" y1="-0.80" x2="453.9" y2="13.42"/><line x1="477.0" y1="-0.80" x2="477.0" y2="13.42"/><line x1="500.1" y1="-0.80" x2="500.1" y2="13.42"/><line x1="523.1" y1="-0.80" x2="523.1" y2="13.42"/><line x1="546.2" y1="-0.80" x2="546.2" y2="13.42"/><line x1="338.5" y1="13.42" x2="338.5" y2="27.64"/><line x1="361.6" y1="13.42" x2="361.6" y2="27.64"/><line x1="384.7" y1="13.42" x2="384.7" y2="27.64"/><line x1="407.7" y1="13.42" x2="407.7" y2="27.64"/><line x1="430.8" y1="13.42" x2="430.8" y2="27.64"/><line x1="453.9" y1="13.42" x2="453.9" y2="27.64"/><line x1="477.0" y1="13.42" x2="477.0" y2="27.64"/><line x1="500.1" y1="13.42" x2="500.1" y2="27.64"/><line x1="523.1" y1="13.42" x2="523.1" y2="27.64"/><line x1="546.2" y1="13.42" x2="546.2" y2="27.64"/><line x1="569.3" y1="13.42" x2="569.3" y2="27.64"/><line x1="338.5" y1="27.64" x2="338.5" y2="41.86"/><line x1="361.6" y1="27.64" x2="361.6" y2="41.86"/><line x1="384.7" y1="27.64" x2="384.7" y2="41.86"/><line x1="407.7" y1="27.64" x2="407.7" y2="41.86"/><line x1="430.8" y1="27.64" x2="430.8" y2="41.86"/><line x1="453.9" y1="27.64" x2="453.9" y2="41.86"/><line x1="477.0" y1="27.64" x2="477.0" y2="41.86"/><line x1="500.1" y1="27.64" x2="500.1" y2="41.86"/><line x1="523.1" y1="27.64" x2="523.1" y2="41.86"/><line x1="546.2" y1="27.64" x2="546.2" y2="41.86"/><line x1="569.3" y1="27.64" x2="569.3" y2="41.86"/><line x1="592.4" y1="27.64" x2="592.4" y2="41.86"/><line x1="338.5" y1="41.86" x2="338.5" y2="56.08"/><line x1="361.6" y1="41.86" x2="361.6" y2="56.08"/><line x1="384.7" y1="41.86" x2="384.7" y2="56.08"/><line x1="407.7" y1="41.86" x2="407.7" y2="56.08"/><line x1="430.8" y1="41.86" x2="430.8" y2="56.08"/><line x1="453.9" y1="41.86" x2="453.9" y2="56.08"/><line x1="477.0" y1="41.86" x2="477.0" y2="56.08"/><line x1="500.1" y1="41.86" x2="500.1" y2="56.08"/><line x1="523.1" y1="41.86" x2="523.1" y2="56.08"/><line x1="546.2" y1="41.86" x2="546.2" y2="56.08"/><line x1="569.3" y1="41.86" x2="569.3" y2="56.08"/><line x1="338.5" y1="56.08" x2="338.5" y2="70.30"/><line x1="361.6" y1="56.08" x2="361.6" y2="70.30"/><line x1="384.7" y1="56.08" x2="384.7" y2="70.30"/><line x1="407.7" y1="56.08" x2="407.7" y2="70.30"/><line x1="430.8" y1="56.08" x2="430.8" y2="70.30"/><line x1="453.9" y1="56.08" x2="453.9" y2="70.30"/><line x1="477.0" y1="56.08" x2="477.0" y2="70.30"/><line x1="500.1" y1="56.08" x2="500.1" y2="70.30"/><line x1="523.1" y1="56.08" x2="523.1" y2="70.30"/><line x1="546.2" y1="56.08" x2="546.2" y2="70.30"/><line x1="338.5" y1="70.30" x2="338.5" y2="84.52"/><line x1="361.6" y1="70.30" x2="361.6" y2="84.52"/><line x1="384.7" y1="70.30" x2="384.7" y2="84.52"/><line x1="407.7" y1="70.30" x2="407.7" y2="84.52"/><line x1="430.8" y1="70.30" x2="430.8" y2="84.52"/><line x1="453.9" y1="70.30" x2="453.9" y2="84.52"/><line x1="477.0" y1="70.30" x2="477.0" y2="84.52"/><line x1="500.1" y1="70.30" x2="500.1" y2="84.52"/><line x1="523.1" y1="70.30" x2="523.1" y2="84.52"/><line x1="338.5" y1="84.52" x2="338.5" y2="98.74"/><line x1="361.6" y1="84.52" x2="361.6" y2="98.74"/><line x1="384.7" y1="84.52" x2="384.7" y2="98.74"/><line x1="407.7" y1="84.52" x2="407.7" y2="98.74"/><line x1="430.8" y1="84.52" x2="430.8" y2="98.74"/><line x1="453.9" y1="84.52" x2="453.9" y2="98.74"/><line x1="477.0" y1="84.52" x2="477.0" y2="98.74"/><line x1="500.1" y1="84.52" x2="500.1" y2="98.74"/><line x1="338.5" y1="98.74" x2="338.5" y2="112.96"/><line x1="361.6" y1="98.74" x2="361.6" y2="112.96"/><line x1="384.7" y1="98.74" x2="384.7" y2="112.96"/><line x1="407.7" y1="98.74" x2="407.7" y2="112.96"/><line x1="430.8" y1="98.74" x2="430.8" y2="112.96"/><line x1="453.9" y1="98.74" x2="453.9" y2="112.96"/><line x1="477.0" y1="98.74" x2="477.0" y2="112.96"/><line x1="500.1" y1="98.74" x2="500.1" y2="112.96"/><line x1="338.5" y1="112.96" x2="338.5" y2="127.18"/><line x1="361.6" y1="112.96" x2="361.6" y2="127.18"/><line x1="384.7" y1="112.96" x2="384.7" y2="127.18"/><line x1="407.7" y1="112.96" x2="407.7" y2="127.18"/><line x1="430.8" y1="112.96" x2="430.8" y2="127.18"/><line x1="453.9" y1="112.96" x2="453.9" y2="127.18"/><line x1="477.0" y1="112.96" x2="477.0" y2="127.18"/><line x1="500.1" y1="112.96" x2="500.1" y2="127.18"/><line x1="523.1" y1="112.96" x2="523.1" y2="127.18"/><line x1="338.5" y1="127.18" x2="338.5" y2="141.40"/><line x1="361.6" y1="127.18" x2="361.6" y2="141.40"/><line x1="384.7" y1="127.18" x2="384.7" y2="141.40"/><line x1="407.7" y1="127.18" x2="407.7" y2="141.40"/><line x1="430.8" y1="127.18" x2="430.8" y2="141.40"/><line x1="453.9" y1="127.18" x2="453.9" y2="141.40"/><line x1="477.0" y1="127.18" x2="477.0" y2="141.40"/><line x1="500.1" y1="127.18" x2="500.1" y2="141.40"/><line x1="523.1" y1="127.18" x2="523.1" y2="141.40"/><line x1="546.2" y1="127.18" x2="546.2" y2="141.40"/><line x1="338.5" y1="141.40" x2="338.5" y2="155.62"/><line x1="361.6" y1="141.40" x2="361.6" y2="155.62"/><line x1="384.7" y1="141.40" x2="384.7" y2="155.62"/><line x1="407.7" y1="141.40" x2="407.7" y2="155.62"/><line x1="430.8" y1="141.40" x2="430.8" y2="155.62"/><line x1="453.9" y1="141.40" x2="453.9" y2="155.62"/><line x1="477.0" y1="141.40" x2="477.0" y2="155.62"/><line x1="500.1" y1="141.40" x2="500.1" y2="155.62"/><line x1="523.1" y1="141.40" x2="523.1" y2="155.62"/><line x1="546.2" y1="141.40" x2="546.2" y2="155.62"/><line x1="569.3" y1="141.40" x2="569.3" y2="155.62"/><line x1="338.5" y1="155.62" x2="338.5" y2="169.84"/><line x1="361.6" y1="155.62" x2="361.6" y2="169.84"/><line x1="384.7" y1="155.62" x2="384.7" y2="169.84"/><line x1="407.7" y1="155.62" x2="407.7" y2="169.84"/><line x1="430.8" y1="155.62" x2="430.8" y2="169.84"/><line x1="453.9" y1="155.62" x2="453.9" y2="169.84"/><line x1="477.0" y1="155.62" x2="477.0" y2="169.84"/><line x1="500.1" y1="155.62" x2="500.1" y2="169.84"/><line x1="523.1" y1="155.62" x2="523.1" y2="169.84"/><line x1="546.2" y1="155.62" x2="546.2" y2="169.84"/><line x1="338.5" y1="169.84" x2="338.5" y2="184.06"/><line x1="361.6" y1="169.84" x2="361.6" y2="184.06"/><line x1="384.7" y1="169.84" x2="384.7" y2="184.06"/><line x1="407.7" y1="169.84" x2="407.7" y2="184.06"/><line x1="430.8" y1="169.84" x2="430.8" y2="184.06"/><line x1="453.9" y1="169.84" x2="453.9" y2="184.06"/><line x1="477.0" y1="169.84" x2="477.0" y2="184.06"/><line x1="500.1" y1="169.84" x2="500.1" y2="184.06"/><line x1="523.1" y1="169.84" x2="523.1" y2="184.06"/><line x1="338.5" y1="184.06" x2="338.5" y2="198.28"/><line x1="361.6" y1="184.06" x2="361.6" y2="198.28"/><line x1="384.7" y1="184.06" x2="384.7" y2="198.28"/><line x1="407.7" y1="184.06" x2="407.7" y2="198.28"/><line x1="430.8" y1="184.06" x2="430.8" y2="198.28"/><line x1="453.9" y1="184.06" x2="453.9" y2="198.28"/><line x1="477.0" y1="184.06" x2="477.0" y2="198.28"/><line x1="500.1" y1="184.06" x2="500.1" y2="198.28"/><line x1="523.1" y1="184.06" x2="523.1" y2="198.28"/><line x1="338.5" y1="198.28" x2="338.5" y2="212.50"/><line x1="361.6" y1="198.28" x2="361.6" y2="212.50"/><line x1="384.7" y1="198.28" x2="384.7" y2="212.50"/><line x1="407.7" y1="198.28" x2="407.7" y2="212.50"/><line x1="430.8" y1="198.28" x2="430.8" y2="212.50"/><line x1="453.9" y1="198.28" x2="453.9" y2="212.50"/><line x1="477.0" y1="198.28" x2="477.0" y2="212.50"/><line x1="500.1" y1="198.28" x2="500.1" y2="212.50"/><line x1="523.1" y1="198.28" x2="523.1" y2="212.50"/><line x1="546.2" y1="198.28" x2="546.2" y2="212.50"/></g></svg>
<div class="a" style="left:521.6px;top:797.44px;width:655.0px;height:13.6px;background:#e6e9ef;border-radius:2px"></div>
<div class="code" style="left:300px;top:698.20px;width:22px;text-align:right;color:#2a87aa">70</div>
<div class="code" style="left:569.30px;top:698.20px"><span class="pn">&lt;</span><span class="tg">c-container</span><span class="bk"> </span><span class="at">class</span><span class="bk">=</span><span class="st2">&quot;accordion-body&quot;</span><span class="bk"> </span><span class="at">data-comp-id</span><span class="bk">=</span><span class="st2">&quot;c-container.3&quot;</span><span class="pn">&gt;</span></div>
<div class="code" style="left:300px;top:712.42px;width:22px;text-align:right;color:#2a87aa">71</div>
<div class="code" style="left:592.38px;top:712.42px"><span class="pn">&lt;</span><span class="tg">div</span><span class="bk"> </span><span class="at">data-comp-id</span><span class="bk">=</span><span class="st2">&quot;subform.1&quot;</span><span class="bk"> </span><span class="at">id</span><span class="bk">=</span><span class="st2">&quot;subform.1&quot;</span><span class="pn">&gt;</span></div>
<div class="code" style="left:300px;top:726.64px;width:22px;text-align:right;color:#2a87aa">72</div>
<div class="code" style="left:615.46px;top:726.64px"><span class="pn">&lt;</span><span class="tg">magic-subform</span><span class="bk"> [</span><span class="at">magic</span><span class="bk">]=</span><span class="st2">&quot;mgc.SubF_M_Contact&quot;</span><span class="pn">&gt;&lt;/</span><span class="tg">magic-subform</span><span class="pn">&gt;</span></div>
<div class="code" style="left:300px;top:740.86px;width:22px;text-align:right;color:#2a87aa">73</div>
<div class="code" style="left:592.38px;top:740.86px"><span class="pn">&lt;/</span><span class="tg">div</span><span class="pn">&gt;</span></div>
<div class="code" style="left:300px;top:755.08px;width:22px;text-align:right;color:#2a87aa">74</div>
<div class="code" style="left:569.30px;top:755.08px"><span class="pn">&lt;/</span><span class="tg">c-container</span><span class="pn">&gt;</span></div>
<div class="code" style="left:300px;top:769.30px;width:22px;text-align:right;color:#2a87aa">75</div>
<div class="code" style="left:546.22px;top:769.30px"><span class="pn">&lt;/</span><span class="tg">ng-template</span><span class="pn">&gt;</span></div>
<div class="code" style="left:300px;top:783.52px;width:22px;text-align:right;color:#2a87aa">76</div>
<div class="code" style="left:523.14px;top:783.52px"><span class="pn">&lt;/</span><span class="tg">c-accordion-item</span><span class="pn">&gt;</span></div>
<div class="code" style="left:300px;top:797.74px;width:22px;text-align:right;color:#2a87aa">77</div>
<div class="code" style="left:523.14px;top:797.74px"><span class="pn">&lt;</span><span class="tg">c-accordion-item</span><span class="bk"> #</span><span class="at">item0</span><span class="bk">=</span><span class="st2">&quot;cAccordionItem&quot;</span><span class="bk"> [</span><span class="at">visible</span><span class="bk">]=</span><span class="st2">&quot;true&quot;</span><span class="bk"> </span><span class="at">data-comp-id</span><span class="bk">=</span><span class="st2">&quot;accordion-item.3&quot;</span><span class="bk"> </span><span class="at">id</span><span class="bk">=</span><span class="st2">&quot;accordion-item.3&quot;</span><span class="pn">&gt;</span></div>
<div class="code" style="left:300px;top:811.96px;width:22px;text-align:right;color:#2a87aa">78</div>
<div class="code" style="left:546.22px;top:811.96px"><span class="pn">&lt;</span><span class="tg">ng-template</span><span class="bk"> </span><span class="at">cTemplateId</span><span class="bk">=</span><span class="st2">&quot;accordionHeaderTemplate&quot;</span><span class="pn">&gt;</span></div>
<div class="code" style="left:300px;top:826.18px;width:22px;text-align:right;color:#2a87aa">79</div>
<div class="code" style="left:569.30px;top:826.18px"><span class="pn">&lt;</span><span class="tg">button</span><span class="bk"> </span><span class="at">cAccordionButton</span><span class="bk"> (</span><span class="at">click</span><span class="bk">)=</span><span class="st2">&quot;item0.toggleItem()&quot;</span><span class="bk"> [</span><span class="at">collapsed</span><span class="bk">]=</span><span class="st2">&quot;!item0.visible&quot;</span><span class="bk"> </span><span class="at">data-comp-id</span><span class="bk">=</span><span class="st2">&quot;accordion-item-header.3&quot;</span><span class="pn">&gt;</span></div>
<div class="code" style="left:300px;top:840.40px;width:22px;text-align:right;color:#2a87aa">80</div>
<div class="code" style="left:592.38px;top:840.40px"><span class="bk">Accordion Button</span></div>
<div class="code" style="left:300px;top:854.62px;width:22px;text-align:right;color:#2a87aa">81</div>
<div class="code" style="left:569.30px;top:854.62px"><span class="pn">&lt;/</span><span class="tg">button</span><span class="pn">&gt;</span></div>
<div class="code" style="left:300px;top:868.84px;width:22px;text-align:right;color:#2a87aa">82</div>
<div class="code" style="left:546.22px;top:868.84px"><span class="pn">&lt;/</span><span class="tg">ng-template</span><span class="pn">&gt;</span></div>
<div class="code" style="left:300px;top:883.06px;width:22px;text-align:right;color:#2a87aa">83</div>
<div class="code" style="left:546.22px;top:883.06px"><span class="pn">&lt;</span><span class="tg">ng-template</span><span class="bk"> </span><span class="at">cTemplateId</span><span class="bk">=</span><span class="st2">&quot;accordionBodyTemplate&quot;</span><span class="pn">&gt;</span></div>
<div class="code" style="left:300px;top:897.28px;width:22px;text-align:right;color:#2a87aa">84</div>
<div class="code" style="left:569.30px;top:897.28px"><span class="pn">&lt;</span><span class="tg">c-container</span><span class="bk"> </span><span class="at">class</span><span class="bk">=</span><span class="st2">&quot;accordion-body&quot;</span><span class="bk"> </span><span class="at">data-comp-id</span><span class="bk">=</span><span class="st2">&quot;c-container.4&quot;</span><span class="pn">&gt;&lt;/</span><span class="tg">c-container</span><span class="pn">&gt;</span></div>
<div class="a" style="left:1649px;top:699px;width:4px;height:212px;background:#f6f6f6"></div>
<div class="a" style="left:1649px;top:839px;width:4px;height:29px;background:#c6c6c6"></div>
<div class="a" style="left:1658px;top:38px;width:262px;height:873px;background:#f3f3f4"></div>
<div class="a" style="left:1661px;top:41px;width:72px;height:21px;background:#f0f0f0;border:1px solid #a3a3a3;border-bottom:0"></div>
<div class="a" style="left:1737px;top:41px;width:73px;height:21px;background:#f0f0f0;border:1px solid #a3a3a3;border-bottom:0"></div>
<div class="a" style="left:1814.5px;top:41px;width:105.5px;height:21px;background:#6db8e2;border:1px solid #9ccbe8;border-bottom:0"></div>
<svg class="a" style="left:1669px;top:45px" width="13" height="14" viewBox="0 0 13 14"><g fill="#6b6b6b"><ellipse cx="6.5" cy="2.3" rx="6" ry="2.2"/><path d="M0.5 3.6 Q6.5 7 12.5 3.6 L12.5 5.6 Q6.5 9 0.5 5.6 Z"/><path d="M0.5 6.9 Q6.5 10.3 12.5 6.9 L12.5 8.9 Q6.5 12.3 0.5 8.9 Z"/><path d="M0.5 10.2 Q6.5 13.6 12.5 10.2 L12.5 11.6 Q6.5 15 0.5 11.6 Z"/></g></svg>
<div class="a" style="left:1693px;top:41px;width:32.5px;height:21px;overflow:hidden"><div class="t" style="left:0;top:6.5px;font-size:11.3px;color:#777">Models</div></div>
<svg class="a" style="left:1745px;top:45px" width="11" height="12" viewBox="0 0 11 12"><g fill="#6b6b6b"><rect x="4" y="0" width="3" height="3"/><rect x="0" y="8.5" width="3" height="3.5"/><rect x="4" y="8.5" width="3" height="3.5"/><rect x="8" y="8.5" width="3" height="3.5"/><rect x="5" y="3" width="1" height="3"/><rect x="1" y="5.5" width="9" height="1"/><rect x="1" y="5.5" width="1" height="3"/><rect x="9" y="5.5" width="1" height="3"/></g></svg>
<div class="a" style="left:1770.5px;top:41px;width:32px;height:21px;overflow:hidden"><div class="t" style="left:0;top:6.5px;font-size:11.3px;color:#777">Outline</div></div>
<svg class="a" style="left:1822px;top:46px" width="15" height="11" viewBox="0 0 15 11"><g fill="#fff"><rect x="0" y="0" width="15" height="1.6"/><rect x="0" y="3" width="15" height="1.6"/><rect x="0" y="6" width="15" height="1.6"/><rect x="0" y="9" width="15" height="1.6"/><rect x="3" y="0" width="0.8" height="11" fill="#6db8e2"/></g></svg>
<div class="a" style="left:1847px;top:41px;width:67px;height:21px;overflow:hidden"><div class="t" style="left:0;top:6.5px;font-size:11.3px;color:#fff">PropertySheet</div></div>
<div class="a" style="left:1658px;top:62px;width:262px;height:3px;background:#0095da"></div>
<div class="a" style="left:1658px;top:65px;width:262px;height:24px;background:#d6d6d6"></div>
<div class="t" style="left:1665px;top:72.3px;font-size:10.5px;color:#111">Accordion Item</div>
<svg class="a" style="left:1902px;top:71px" width="10" height="11" viewBox="0 0 10 11"><g fill="#2f8fe0"><rect x="0" y="1.5" width="10" height="1.3"/><rect x="3.2" y="0" width="3.6" height="1.6"/><path d="M1 3.2 L9 3.2 L8.3 11 L1.7 11 Z"/></g><g fill="#d6d6d6"><rect x="3.2" y="4.5" width="1" height="5"/><rect x="5.8" y="4.5" width="1" height="5"/></g></svg>
<div class="a" style="left:1658px;top:89px;width:262px;height:16.5px;background:#e4e4e4"><div class="a" style="left:5px;top:5px;width:0;height:0;border-left:3.5px solid transparent;border-right:3.5px solid transparent;border-top:6px solid #777"></div><div class="t" style="left:19.5px;top:4px;font-size:9px;font-weight:bold;color:#111">Events &amp; Data</div></div>
<div class="t" style="left:1663.5px;top:115px;font-size:9px;color:#111">Accordion Item Id</div>
<div class="a" style="left:1740px;top:112px;width:174px;height:16px;background:#fff;border:1px solid #a8a8a8"></div>
<div class="t" style="left:1743.5px;top:115.5px;font-size:9.5px;color:#111">accordion-item.3</div>
<div class="a" style="left:1658px;top:136px;width:262px;height:16.5px;background:#e4e4e4"><div class="a" style="left:5px;top:5px;width:0;height:0;border-left:3.5px solid transparent;border-right:3.5px solid transparent;border-top:6px solid #777"></div><div class="t" style="left:19.5px;top:4px;font-size:9px;font-weight:bold;color:#111">Styling Overrides</div></div>
<div class="t" style="left:1660px;top:161px;width:29.5px;text-align:right;font-size:9px;color:#111">Fluid</div>
<div class="a" style="left:1696px;top:160px;width:12px;height:11.5px;background:#fff;border:1px solid #888;border-radius:2px"></div>
<div class="t" style="left:1655px;top:177px;width:34.5px;text-align:right;font-size:9px;color:#111">Visible</div>
<div class="a" style="left:1696px;top:175px;width:12px;height:11.5px;background:#1b74e8;border-radius:2px"></div>
<svg class="a" style="left:1696px;top:175px" width="12" height="12"><path d="M2.5 6 L5 8.6 L9.7 3.3" fill="none" stroke="#fff" stroke-width="1.8"/></svg>
<div class="t" style="left:1655px;top:192px;width:34.5px;text-align:right;font-size:9px;color:#111">Class</div>
<div class="a" style="left:1696px;top:189px;width:218px;height:22.5px;background:#fff;border:1px solid #a8a8a8"></div>
<div class="t" style="left:1700.5px;top:196px;font-size:10.5px;color:#777">Select class...</div>
<div class="a" style="left:1658px;top:226px;width:262px;height:16.5px;background:#e4e4e4"><div class="a" style="left:5px;top:5px;width:0;height:0;border-left:3.5px solid transparent;border-right:3.5px solid transparent;border-top:6px solid #777"></div><div class="t" style="left:19.5px;top:4px;font-size:9px;font-weight:bold;color:#111">Dynamic Properties</div></div>
<svg class="a" style="left:1665px;top:251px" width="10" height="10"><path d="M5 0.5 V9.5 M0.5 5 H9.5" stroke="#111" stroke-width="2.2"/></svg>
<div class="t" style="left:1681px;top:252px;font-size:10px;color:#111">Add New Property</div>
<svg class="a" style="left:11px;top:50px" width="16" height="17" viewBox="0 0 16 17"><path d="M1.5 1 H10 L14.5 5.5 V16 H1.5 Z" fill="none" stroke="#fff" stroke-width="1.6"/><path d="M9.5 1 V6 H14.5" fill="none" stroke="#fff" stroke-width="1.4"/><rect x="4" y="8" width="8" height="1.4" fill="#fff"/><rect x="4" y="10.5" width="8" height="1.4" fill="#fff"/><rect x="4" y="13" width="8" height="1.4" fill="#fff"/></svg>
<svg class="a" style="left:11px;top:85px" width="18" height="17" viewBox="0 0 18 17"><path d="M1 5 H5 Q3.5 2.5 6 1 Q8.5 0 9 3 Q9 4 8 5 H11 V9 Q13 7.5 15 8.5 Q17.5 10 15.5 12.5 Q13.5 13.5 11 12 V16.5 H7.5 Q8.5 14 6.5 13 Q4.5 12.5 4 14 Q3.7 15.5 4.5 16.5 H1 Z" fill="#fff"/></svg>
<svg class="a" style="left:11px;top:125px" width="17" height="17" viewBox="0 0 17 17"><path d="M6 1 H11 L15.5 5 V12.5 H6 Z" fill="none" stroke="#b4b4b4" stroke-width="1.5"/><path d="M1.5 5 H8 V16 H1.5 Z" fill="none" stroke="#b4b4b4" stroke-width="1.5"/></svg>
<svg class="a" style="left:12px;top:163px" width="14" height="14" viewBox="0 0 14 14"><rect x="0.5" y="0.5" width="13" height="13" rx="2" fill="#fff"/><path d="M3.5 10 Q4 5.5 9 5.5 V3.5 L12 6.8 L9 10 V8 Q5.5 8 3.5 10 Z" fill="#646464"/></svg>
<svg class="a" style="left:11px;top:201px" width="15" height="15" viewBox="0 0 15 15"><circle cx="7.5" cy="7.5" r="4.2" fill="none" stroke="#fff" stroke-width="3"/><g stroke="#fff" stroke-width="2.6"><line x1="7.5" y1="0.5" x2="7.5" y2="14.5"/><line x1="0.5" y1="7.5" x2="14.5" y2="7.5"/><line x1="2.5" y1="2.5" x2="12.5" y2="12.5"/><line x1="12.5" y1="2.5" x2="2.5" y2="12.5"/></g><circle cx="7.5" cy="7.5" r="1.8" fill="#646464"/></svg>
<svg class="a" style="left:305px;top:17px" width="10" height="12" viewBox="0 0 10 12"><path d="M0.7 0.7 H6.5 L9.3 3.5 V11.3 H0.7 Z" fill="#fff" stroke="#9a9a9a" stroke-width="1"/><rect x="2.3" y="6" width="5.4" height="1" fill="#9a9a9a"/><rect x="2.3" y="8" width="5.4" height="1.3" fill="#9a9a9a"/></svg>
<svg class="a" style="left:359px;top:18px" width="11" height="10" viewBox="0 0 14 14"><path d="M12 5.5 A5 5 0 0 0 2.8 4 M2 8.5 A5 5 0 0 0 11.2 10" fill="none" stroke="#c9c9c9" stroke-width="2"/><path d="M1 1.5 L1.5 6 L6 5 Z M13 12.5 L12.5 8 L8 9 Z" fill="#c9c9c9"/></svg>
<svg class="a" style="left:372.5px;top:20px" width="8" height="8"><path d="M1 1 L7 7 M7 1 L1 7" stroke="#c4c4c4" stroke-width="1.8"/></svg>
<svg class="a" style="left:1726px;top:12px" width="15" height="13" viewBox="0 0 15 13"><path d="M4.3 2.5 L1 6.5 L4.3 10.5 M10.7 2.5 L14 6.5 L10.7 10.5 M8.6 1 L6.4 12" fill="none" stroke="#fff" stroke-width="1.3"/></svg>
<svg class="a" style="left:1765px;top:11px" width="11" height="12" viewBox="0 0 11 12"><g fill="#fff"><path d="M0 0 H4.5 L3 1.5 L5.5 4 L4 5.5 L1.5 3 L0 4.5 Z"/><path d="M11 0 V4.5 L9.5 3 L7 5.5 L5.5 4 L8 1.5 L6.5 0 Z"/><path d="M0 12 V7.5 L1.5 9 L4 6.5 L5.5 8 L3 10.5 L4.5 12 Z"/><path d="M11 12 H6.5 L8 10.5 L5.5 8 L7 6.5 L9.5 9 L11 7.5 Z"/></g></svg>
<svg class="a" style="left:1802px;top:12px" width="14" height="12" viewBox="0 0 14 12"><circle cx="5" cy="6" r="2.7" fill="none" stroke="#fff" stroke-width="2.4"/><g stroke="#fff" stroke-width="1.8"><line x1="5" y1="1.5" x2="5" y2="10.5"/><line x1="0.5" y1="6" x2="9.5" y2="6"/><line x1="1.8" y1="2.8" x2="8.2" y2="9.2"/><line x1="8.2" y1="2.8" x2="1.8" y2="9.2"/></g><circle cx="5" cy="6" r="1" fill="#0095da"/><circle cx="11" cy="2.8" r="1.8" fill="none" stroke="#fff" stroke-width="1.3"/><circle cx="11" cy="9.4" r="1.8" fill="none" stroke="#fff" stroke-width="1.3"/></svg>
<svg class="a" style="left:1839px;top:12px" width="13" height="11" viewBox="0 0 13 11"><rect x="0.9" y="0.9" width="11.2" height="7.6" rx="1" fill="none" stroke="#fff" stroke-width="1.8"/><rect x="4.5" y="9" width="4" height="2" fill="#fff"/></svg>
<div class="a" style="left:130px;top:222px;width:144px;height:54.5px;border:10px solid #fed046"></div>
<div class="a" style="left:454.5px;top:449px;width:1033px;height:144px;border:10px solid #fed046"></div>
<svg class="a" style="left:0;top:0" width="1920" height="911"><path d="M254.0 269.5 L254.0 273.9 L254.1 278.4 L254.3 282.8 L254.6 287.2 L255.1 291.5 L255.7 295.9 L256.5 300.3 L257.3 304.6 L258.3 308.9 L259.3 313.3 L260.5 317.6 L261.8 321.9 L263.2 326.1 L264.7 330.4 L266.2 334.6 L267.9 338.9 L269.7 343.1 L271.5 347.3 L273.5 351.5 L275.5 355.6 L277.6 359.8 L279.8 363.9 L282.0 368.1 L284.3 372.2 L286.7 376.2 L289.2 380.3 L291.7 384.4 L294.3 388.4 L297.0 392.4 L299.7 396.4 L302.4 400.4 L305.3 404.3 L308.1 408.3 L311.0 412.2 L314.0 416.1 L317.0 419.9 L320.0 423.8 L323.1 427.6 L326.2 431.4 L329.4 435.2 L332.6 438.9 L335.8 442.6 L339.0 446.3 L342.3 450.0 L345.6 453.6 L348.9 457.2 L352.2 460.8 L355.5 464.4 L358.9 467.9 L362.2 471.4 L365.6 474.8 L368.9 478.3 L372.3 481.7 L375.7 485.0 L379.0 488.3 L382.4 491.6 L385.7 494.9 L389.1 498.1 L392.4 501.3 L395.7 504.4 L399.0 507.5 L402.3 510.6 L405.6 513.6 L408.8 516.6 L412.0 519.6 L415.2 522.5 L418.3 525.3 L421.4 528.1 L424.5 530.9 L431.5 523.1 L428.5 520.3 L425.4 517.5 L422.3 514.7 L419.1 511.8 L415.9 508.9 L412.7 505.9 L409.5 502.9 L406.3 499.9 L403.0 496.8 L399.8 493.6 L396.5 490.5 L393.2 487.3 L389.9 484.0 L386.6 480.7 L383.3 477.4 L380.0 474.1 L376.7 470.7 L373.4 467.3 L370.1 463.8 L366.9 460.3 L363.6 456.8 L360.4 453.3 L357.1 449.7 L353.9 446.1 L350.8 442.5 L347.6 438.9 L344.5 435.2 L341.4 431.5 L338.3 427.8 L335.3 424.0 L332.3 420.2 L329.4 416.4 L326.5 412.6 L323.6 408.8 L320.8 405.0 L318.1 401.1 L315.4 397.2 L312.8 393.3 L310.2 389.4 L307.7 385.5 L305.2 381.5 L302.8 377.6 L300.5 373.6 L298.3 369.6 L296.1 365.6 L294.0 361.6 L292.0 357.6 L290.0 353.6 L288.2 349.6 L286.4 345.6 L284.7 341.6 L283.1 337.6 L281.6 333.6 L280.2 329.6 L278.9 325.6 L277.7 321.6 L276.6 317.6 L275.6 313.6 L274.7 309.6 L273.9 305.6 L273.3 301.7 L272.7 297.7 L272.2 293.8 L271.9 289.9 L271.7 286.0 L271.6 282.1 L271.6 278.2 L271.7 274.3 L272.0 270.5 Z" fill="#fed046"/><path d="M402.5 472 L416 508 L409 517 L373.5 503.5 L373.5 519 L438 541 L442.5 539 L441.5 533 L419.5 476.5 L412 466 Z" fill="#fed046" stroke="#fed046" stroke-width="3" stroke-linejoin="round"/><g fill="#fed046"><circle cx="410.8" cy="474" r="8.6"/><circle cx="373.5" cy="511.2" r="7.9"/></g></svg>
<svg class="a" style="left:28px;top:836px" width="50" height="50" viewBox="0 0 50 50"><defs><radialGradient id="mg" cx="0.6" cy="0.3" r="0.8"><stop offset="0" stop-color="#0fa3dc"/><stop offset="1" stop-color="#0a5c9e"/></radialGradient><filter id="sh" x="-20%" y="-20%" width="140%" height="140%"><feDropShadow dx="0.5" dy="1" stdDeviation="1" flood-color="#000" flood-opacity="0.25"/></filter></defs><circle cx="22.9" cy="24" r="20.5" fill="#fff" filter="url(#sh)"/><path d="M29 4 C 24 10, 14 14, 8 22 C 2 32, 8 43, 22 44 C 36 45, 43 36, 41 22 C 40 14, 36 6, 29 4 Z" fill="url(#mg)"/><text x="11.5" y="29" font-family="Liberation Sans" font-size="9.6" fill="#fff" letter-spacing="-0.4">mogic</text><circle cx="38.6" cy="9.3" r="7.4" fill="#c60a0a"/><text x="38.6" y="12.8" font-family="Liberation Sans" font-weight="bold" font-size="9.5" fill="#fff" text-anchor="middle">75</text></svg>
</body></html>
